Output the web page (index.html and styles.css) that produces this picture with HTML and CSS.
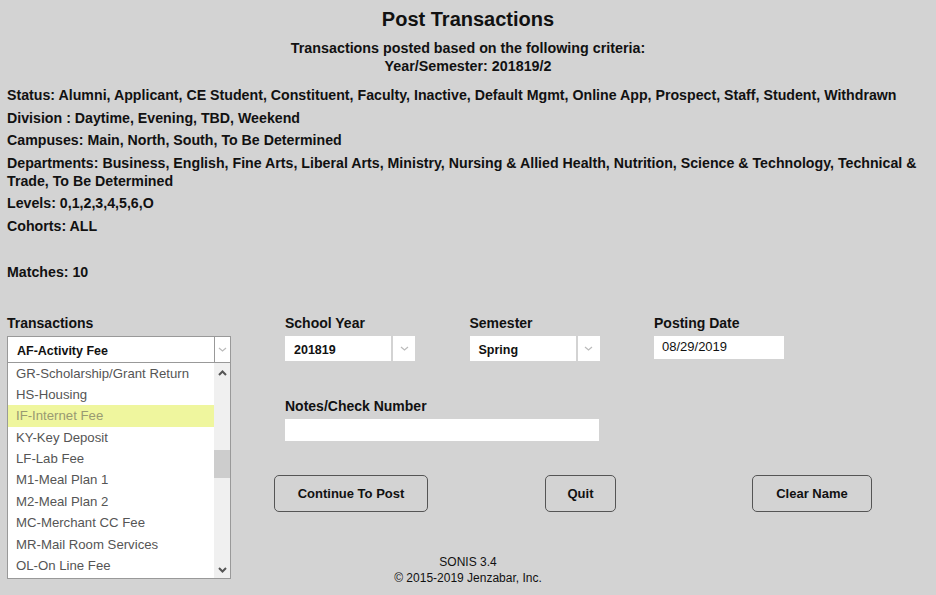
FILE: index.html
```html
<!DOCTYPE html>
<html lang="en">
<head>
    <meta charset="UTF-8">
    <title>Post Transactions</title>
    <link rel="stylesheet" href="styles.css">
</head>
<body>
    <div class="page">
        <h1 class="title">Post Transactions</h1>
        <div class="criteria-head">
            Transactions posted based on the following criteria:<br>
            Year/Semester: 201819/2
        </div>

        <div class="criteria">
            <p>Status: Alumni, Applicant, CE Student, Constituent, Faculty, Inactive, Default Mgmt, Online App, Prospect, Staff, Student, Withdrawn</p>
            <p>Division : Daytime, Evening, TBD, Weekend</p>
            <p>Campuses: Main, North, South, To Be Determined</p>
            <p>Departments: Business, English, Fine Arts, Liberal Arts, Ministry, Nursing &amp; Allied Health, Nutrition, Science &amp; Technology, Technical &amp; Trade, To Be Determined</p>
            <p>Levels: 0,1,2,3,4,5,6,O</p>
            <p>Cohorts: ALL</p>
            <p class="matches">Matches: 10</p>
        </div>

        <div class="form">
            <div class="field trans">
                <label>Transactions</label>
                <div class="select big">
                    <span class="value">AF-Activity Fee</span>
                    <span class="arrow">
                        <svg width="9" height="5" viewBox="0 0 9 5"><path d="M1 1l3.5 3L8 1" fill="none" stroke="#bbb" stroke-width="1.2"/></svg>
                    </span>
                    <div class="dropdown">
                        <ul class="options">
                            <li>GR-Scholarship/Grant Return</li>
                            <li>HS-Housing</li>
                            <li class="hover">IF-Internet Fee</li>
                            <li>KY-Key Deposit</li>
                            <li>LF-Lab Fee</li>
                            <li>M1-Meal Plan 1</li>
                            <li>M2-Meal Plan 2</li>
                            <li>MC-Merchant CC Fee</li>
                            <li>MR-Mail Room Services</li>
                            <li>OL-On Line Fee</li>
                        </ul>
                        <div class="scrollbar">
                            <svg class="sb-up" width="9" height="6" viewBox="0 0 9 6"><path d="M1 5l3.5-3.5L8 5" fill="none" stroke="#555" stroke-width="2"/></svg>
                            <div class="thumb"></div>
                            <svg class="sb-down" width="9" height="6" viewBox="0 0 9 6"><path d="M1 1l3.5 3.5L8 1" fill="none" stroke="#555" stroke-width="2"/></svg>
                        </div>
                    </div>
                </div>
            </div>

            <div class="right">
                <div class="row">
                    <div class="field">
                        <label>School Year</label>
                        <div class="select small">
                            <span class="value">201819</span>
                            <span class="arrow">
                                <svg width="9" height="5" viewBox="0 0 9 5"><path d="M1 1l3.5 3L8 1" fill="none" stroke="#bbb" stroke-width="1.2"/></svg>
                            </span>
                        </div>
                    </div>
                    <div class="field">
                        <label>Semester</label>
                        <div class="select small">
                            <span class="value">Spring</span>
                            <span class="arrow">
                                <svg width="9" height="5" viewBox="0 0 9 5"><path d="M1 1l3.5 3L8 1" fill="none" stroke="#bbb" stroke-width="1.2"/></svg>
                            </span>
                        </div>
                    </div>
                    <div class="field">
                        <label>Posting Date</label>
                        <div class="date-input">08/29/2019</div>
                    </div>
                </div>

                <div class="field notes">
                    <label>Notes/Check Number</label>
                    <div class="text-input"></div>
                </div>

                <div class="buttons">
                    <button class="btn btn-post">Continue To Post</button>
                    <button class="btn btn-quit">Quit</button>
                    <button class="btn btn-clear">Clear Name</button>
                </div>
            </div>
        </div>

        <div class="footer">
            SONIS 3.4<br>
            &copy; 2015-2019 Jenzabar, Inc.
        </div>
    </div>
</body>
</html>
```

FILE: styles.css
```css
body {
    margin: 0;
    background: #d3d3d3;
    font-family: 'Liberation Sans', Arial, sans-serif;
    color: #111;
}

.page {
    padding: 0 7px;
}

.title {
    margin: 0;
    padding-top: 8px;
    font-size: 20px;
    line-height: 22px;
    text-align: center;
}

.criteria-head {
    margin-top: 9px;
    font-size: 14.3px;
    font-weight: bold;
    line-height: 18px;
    text-align: center;
}

.criteria {
    margin-top: 11px;
    font-size: 14.2px;
    font-weight: bold;
}

.criteria p {
    margin: 0 0 4.5px;
    line-height: 18px;
}

.criteria .matches {
    margin-top: 28px;
}

/* form area */
.form {
    display: flex;
    margin-top: 34px;
}

.field label {
    display: block;
    font-size: 14px;
    font-weight: bold;
    line-height: 16px;
    margin-bottom: 5px;
}

.trans {
    width: 224px;
}

.select {
    position: relative;
    display: flex;
    background: #fff;
    font-size: 12.5px;
    font-weight: bold;
}

.select .value {
    flex: 1;
    padding-top: 3px;
    line-height: 22px;
}

.select .arrow {
    display: flex;
    align-items: center;
    justify-content: center;
}

.select.big {
    border: 1px solid #999;
    height: 25px;
}

.select.big .value {
    padding-left: 9px;
}

.select.big .arrow {
    width: 15px;
    border-left: 1px solid #999;
}

.select.small {
    width: 130px;
    height: 25px;
    margin-top: 1px;
}

.select.small .value {
    padding-left: 9px;
}

.select.small .arrow {
    width: 22px;
    border-left: 2px solid #d3d3d3;
}

/* opened dropdown */
.dropdown {
    position: absolute;
    top: 26px;
    left: -1px;
    width: 222px;
    height: 215px;
    display: flex;
    background: #fff;
    border: 1px solid #999;
    border-top: none;
    font-size: 13.2px;
    font-weight: normal;
}

.options {
    flex: 1;
    margin: 0;
    padding: 0;
    list-style: none;
}

.options li {
    height: 21.4px;
    line-height: 21.4px;
    padding-left: 8px;
    color: #555;
}

.options li.hover {
    background: #eff69e;
    color: #999a72;
}

.scrollbar {
    position: relative;
    width: 16px;
    background: #f0f0f0;
}

.sb-up {
    position: absolute;
    top: 7px;
    left: 4px;
}

.sb-down {
    position: absolute;
    bottom: 5px;
    left: 4px;
}

.thumb {
    position: absolute;
    top: 87px;
    left: 0;
    width: 16px;
    height: 28px;
    background: #cdcdcd;
}

/* right column */
.right {
    margin-left: 54px;
}

.row {
    display: flex;
}

.row .field {
    width: 184.5px;
}

.date-input {
    width: 122px;
    height: 23px;
    margin-top: 1px;
    padding-left: 8px;
    background: #fff;
    font-size: 13px;
    line-height: 22px;
}

.notes {
    margin-top: 37px;
}

.text-input {
    width: 314px;
    height: 22px;
    margin-top: 1px;
    background: #fff;
}

.buttons {
    display: flex;
    margin-top: 34px;
    margin-left: -11px;
}

.btn {
    height: 37px;
    background: transparent;
    border: 1px solid #555;
    border-radius: 5px;
    font-family: 'Liberation Sans', Arial, sans-serif;
    font-size: 13px;
    font-weight: bold;
    color: #111;
    padding: 0;
}

.btn-post {
    width: 154px;
}

.btn-quit {
    width: 71px;
    margin-left: 117px;
}

.btn-clear {
    width: 120px;
    margin-left: 136px;
}

.footer {
    margin-top: 42px;
    font-size: 12px;
    line-height: 16px;
    text-align: center;
}
```
